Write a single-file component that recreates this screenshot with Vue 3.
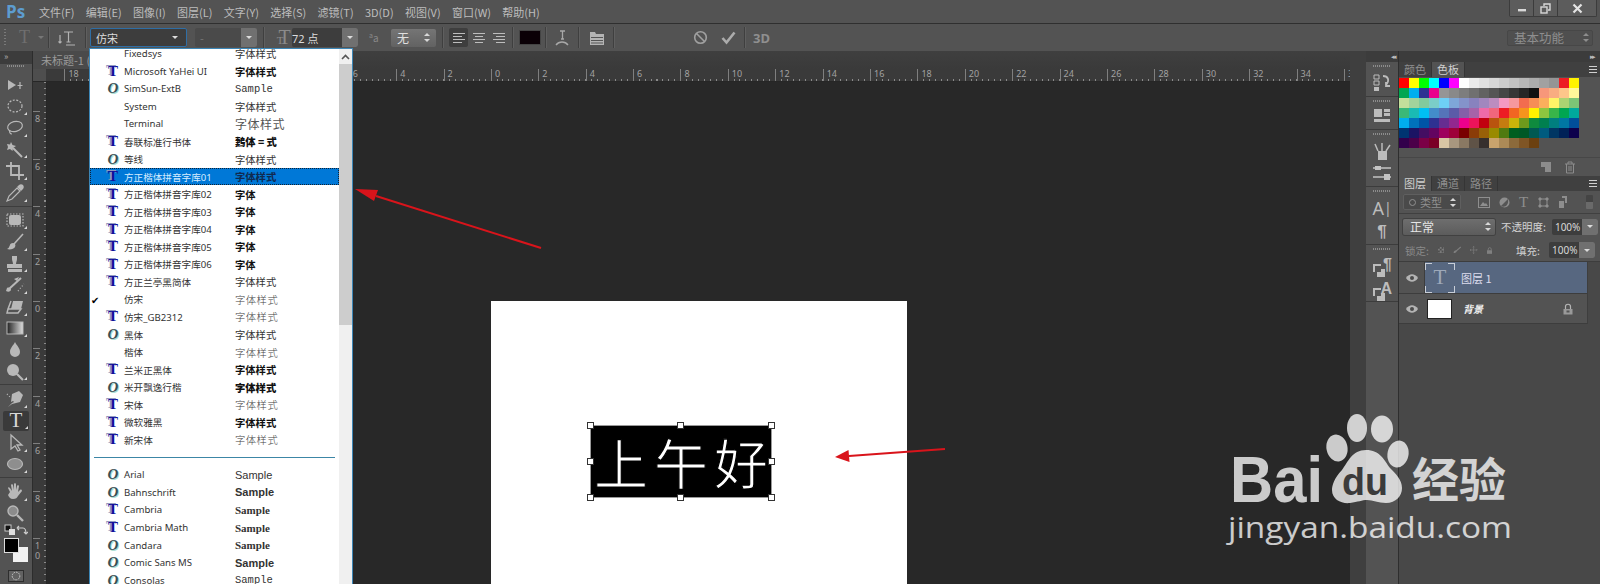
<template>
  <div class="ps">
    <!-- Menu bar -->
    <header class="menubar">
      <span class="logo">Ps</span>
      <nav class="menus">
        <span v-for="m in menus" :key="m">{{ m }}</span>
      </nav>
      <div class="winbtns">
        <span class="winbtn"><svg width="10" height="10" viewBox="0 0 10 10"><rect x="1" y="6" width="8" height="2.4" fill="#d8d8d8" /></svg></span>
        <span class="winbtn"><svg width="11" height="11" viewBox="0 0 11 11" fill="none" stroke="#d8d8d8" stroke-width="1.4"><rect x="1" y="4" width="6" height="6" /><path d="M4 3V1h6v6H8" /></svg></span>
        <span class="winbtn wide"><svg width="11" height="11" viewBox="0 0 11 11" stroke="#e4e4e4" stroke-width="2.2"><path d="M1.5 1.5l8 8M9.5 1.5l-8 8" /></svg></span>
      </div>
    </header>

    <!-- Options bar -->
    <div class="optbar">
      <span class="vgrip"></span>
      <span class="opt-t dim">T</span>
      <span class="caret small dimc"></span>
      <span class="vsep a"></span>
      <svg class="opt-ico b" width="20" height="20" viewBox="0 0 20 20" fill="none" stroke="#b4b4b4" stroke-width="1.2"><path d="M6 4h9M10.500 4v10M8.500 14h4M2 7v8M.5 13.500L2 15l1.500-1.500M8 17h9" /></svg>
      <span class="vsep c"></span>
      <div class="combo font"><span class="combo-val">仿宋</span><span class="caret"></span></div>
      <div class="combo style"><span class="combo-val">-</span><span class="combo-arrow"><span class="caret"></span></span></div>
      <span class="vsep d"></span>
      <span class="opt-tt">T<small>T</small></span>
      <div class="combo size"><span class="combo-val">72 点</span><span class="combo-arrow"><span class="caret"></span></span></div>
      <span class="aa"><sup>a</sup>a</span>
      <div class="spin"><span>无</span><span class="updown"></span></div>
      <span class="vsep e"></span>
      <span class="align on"><svg width="14" height="12" viewBox="0 0 14 12" stroke="#bdbdbd"><path d="M1 1.500h12M1 4.500h9M1 7.500h12M1 10.500h9" /></svg></span>
      <span class="align"><svg width="14" height="12" viewBox="0 0 14 12" stroke="#bdbdbd"><path d="M1 1.500h12M3 4.500h8M1 7.500h12M3 10.500h8" /></svg></span>
      <span class="align"><svg width="14" height="12" viewBox="0 0 14 12" stroke="#bdbdbd"><path d="M1 1.500h12M4 4.500h9M1 7.500h12M4 10.500h9" /></svg></span>
      <span class="vsep f"></span>
      <span class="swatch-black"></span>
      <span class="vsep g"></span>
      <svg class="opt-ico h" width="16" height="20" viewBox="0 0 16 20" fill="none" stroke="#a8a8a8" stroke-width="1.300"><path d="M6 3h5M8.500 3v8M7 11h3M2 17c3-4 9-4 12 0" /></svg>
      <span class="vsep g2"></span>
      <svg class="opt-ico i" width="16" height="16" viewBox="0 0 16 16"><path fill="#b4b4b4" d="M1 2h5l1 2h8v11H1z" /><path stroke="#555" d="M2 7.500h12M2 10.500h12M2 13h12" /></svg>
      <span class="vsep j"></span>
      <svg class="opt-ico k" width="15" height="15" viewBox="0 0 15 15" fill="none" stroke="#a0a0a0" stroke-width="1.600"><circle cx="7.500" cy="7.500" r="5.800" /><path d="M3.500 3.500l8 8" /></svg>
      <svg class="opt-ico l" width="15" height="15" viewBox="0 0 15 15" fill="none" stroke="#acacac" stroke-width="2.600"><path d="M1.500 8l4 4.500 8-10" /></svg>
      <span class="vsep m"></span>
      <span class="threed">3D</span>
      <div class="workspace-select"><span>基本功能</span><span class="updown"></span></div>
    </div>

    <div class="workspace">
      <!-- Tools -->
      <aside class="toolbar">
        <div class="toolbar-head">»</div>
        <div class="grip"></div>
        <div class="tool"><svg viewBox="0 0 22 22"><path class="fl" d="M4 6l8 5-8 5z" /><path d="M16 8v7M13.500 11.500h5" /></svg></div>
        <div class="tool corner"><svg viewBox="0 0 22 22"><ellipse cx="11" cy="11" rx="7" ry="6" stroke-dasharray="2 1.500" /></svg></div>
        <div class="tool corner"><svg viewBox="0 0 22 22"><ellipse cx="11" cy="9.500" rx="7.500" ry="5" transform="rotate(-15 11 9.500)" /><path d="M6 13c-1 2 0 4 2 4" /></svg></div>
        <div class="tool corner"><svg viewBox="0 0 22 22"><path class="fl" d="M7 3l1.500 3L12 7 9 9l-.5 3L6 10 3 11l1-3-1-3 3 .5z" /><path stroke-width="2" d="M9 9l9 9" /></svg></div>
        <div class="tool corner"><svg viewBox="0 0 22 22"><path stroke-width="1.800" d="M7 2v13h13M2 6h13v14" /></svg></div>
        <div class="tool corner"><svg viewBox="0 0 22 22"><path d="M3 19l2-5 8-8 3 3-8 8z" /><path class="fl" d="M13 5l2-2c1-1 3-1 4 0s1 3 0 4l-2 2z" /></svg></div>
        <div class="tooldiv"></div>
        <div class="tool corner"><svg viewBox="0 0 22 22"><rect class="fl" x="5" y="6" width="12" height="10" rx="2" /><path stroke-dasharray="1.500 1.500" d="M3 5h16v12H3z" /></svg></div>
        <div class="tool corner"><svg viewBox="0 0 22 22"><path stroke-width="1.600" d="M19 3L10 13" /><path class="fl" d="M9 12c2 0 3 2 2 4-1 2-5 3-8 2 2-1 2-2 3-4 0-1 1-2 3-2z" /></svg></div>
        <div class="tool corner"><svg viewBox="0 0 22 22"><path class="fl" d="M8 3h5v3c0 2-1 3-1 5h6v4H3v-4h6c0-2-1-3-1-5zM4 16h14v3H4z" /></svg></div>
        <div class="tool corner"><svg viewBox="0 0 22 22"><path stroke-width="2" d="M17 4L5 15" /><path class="fl" d="M3 14c2-1 4 0 4 2-1 2-3 2-5 1zM10 5l5-2-2 4z" /><path stroke-dasharray="1 2" d="M14 17l6-7" /></svg></div>
        <div class="tool corner"><svg viewBox="0 0 22 22"><path class="fl" d="M9 5h10l-2 8H7z" /><path stroke-width="1.500" d="M4 13l3-8M7 13H4l-1 4h11l3-4z" /></svg></div>
        <div class="tool corner"><svg viewBox="0 0 22 22"><rect x="3" y="5" width="16" height="12" fill="url(#grad)" stroke-width="1" /></svg></div>
        <div class="tool"><svg viewBox="0 0 22 22"><path class="fl" d="M11 3c2 4 5 6 5 10a5 5 0 0 1-10 0c0-4 3-6 5-10z" /></svg></div>
        <div class="tool corner"><svg viewBox="0 0 22 22"><circle class="fl" cx="9" cy="9" r="6" /><path stroke-width="2.200" d="M13 13l6 6" /></svg></div>
        <div class="tooldiv"></div>
        <div class="tool corner"><svg viewBox="0 0 22 22"><path class="fl" d="M15 3l4 4-3 7-8 2-4 3 4-4 2-1-1-1-2 1 1-8z" /><path stroke-dasharray="1 2" d="M3 6l3 3" /></svg></div>
        <div class="tool corner active"><span class="tool-t">T</span></div>
        <div class="tool corner"><svg viewBox="0 0 22 22"><path stroke-width="1.300" d="M7 3v14l4-3 3 5 2-1-3-5h5z" /></svg></div>
        <div class="tool corner"><svg viewBox="0 0 22 22"><ellipse class="fl2" cx="11" cy="11" rx="7.500" ry="5.500" /></svg></div>
        <div class="tooldiv"></div>
        <div class="tool corner"><svg viewBox="0 0 22 22"><path class="fl" d="M6 11L4 7c0-1 1-1 2 0l2 3-1-6c0-1 2-1 2 0l1 5V3c0-1 2-1 2 0v6l1-4c0-1 2-1 2 0l-1 6 2-2c1-1 2 0 2 1l-4 5c-1 2-2 3-5 3s-4-2-5-4z" /></svg></div>
        <div class="tool"><svg viewBox="0 0 22 22"><circle cx="9" cy="9" r="5" fill="#8c8c8c" stroke-width="1.400" /><path stroke-width="2.400" d="M13 13l6 6" /></svg></div>
        <div class="swap">
          <svg width="12" height="12" viewBox="0 0 12 12"><rect x="1" y="1" width="6" height="6" fill="#111" stroke="#ccc" /><rect x="5" y="5" width="6" height="6" fill="#ddd" /></svg>
          <svg width="12" height="12" viewBox="0 0 12 12" fill="none" stroke="#ccc" stroke-width="1.200"><path d="M2 4h5c2 0 3 1 3 6M1 4l2-2M1 4l2 2M8 8l2 2 2-2" /></svg>
        </div>
        <div class="colors">
          <span class="bg-color"></span>
          <span class="fg-color"></span>
        </div>
        <div class="quickmask"><svg width="16" height="12" viewBox="0 0 16 12"><rect x=".5" y=".5" width="15" height="11" fill="#626262" stroke="#2e2e2e" /><circle cx="8" cy="6" r="3.800" fill="none" stroke="#ccc" stroke-dasharray="1.500 1" /></svg></div>
      </aside>

      <!-- Document area -->
      <main class="docarea">
        <div class="tabstrip"><span class="doctab">未标题-1 (</span></div>
        <div class="hruler">
          <span class="ruler-corner"></span>
          <div class="hticks">
            <span v-for="(n, i) in hLabels" :key="i" class="hcell">{{ n }}</span>
          </div>
        </div>
        <div class="docrow">
          <div class="vruler">
            <span v-for="(n, i) in vLabels" :key="i" class="vcell">{{ n }}</span>
          </div>
          <div class="canvas">
            <div class="sheet">
              <div class="textbox">
                <span>上</span><span>午</span><span>好</span>
                <i v-for="h in handles" :key="h" class="handle" :class="h"></i>
              </div>
            </div>
          </div>
        </div>
      </main>
      <div class="gutter"></div>

      <!-- Icon strip -->
      <aside class="strip">
        <div class="strip-top"><span class="tiny">◂◂</span></div>
        <div class="strip-group">
          <div class="grip"></div>
          <svg width="22" height="20" viewBox="0 0 22 20"><path fill="none" stroke="#bcbcbc" d="M3 2h5v4H3zM3 8h5v4H3z" /><rect x="3" y="14" width="5" height="4" fill="#bcbcbc" /><path fill="none" stroke="#bcbcbc" stroke-width="1.800" d="M12 3c5 0 7 4 3 9M15 9v4h4" /></svg>
        </div>
        <div class="strip-group g2">
          <div class="grip"></div>
          <svg width="22" height="16" viewBox="0 0 22 16"><path fill="#bcbcbc" d="M3 1h8v8H3zM13 1h6v3h-6zM13 5h6v3h-6zM3 11h16v3H3z" /></svg>
        </div>
        <div class="strip-group g3">
          <div class="grip"></div>
          <svg width="22" height="20" viewBox="0 0 22 20"><path fill="#bcbcbc" d="M7 10h9v9H7z" /><path fill="none" stroke="#bcbcbc" stroke-width="1.500" d="M7 10L4 3M11 10V2M15 10l4-6" /></svg>
          <svg width="22" height="18" viewBox="0 0 22 18"><path fill="none" stroke="#c4c4c4" stroke-width="1.600" d="M2 4h18M2 13h18" /><path fill="#c4c4c4" d="M4 2h6v4H4zM13 10h6v6h-6z" /></svg>
        </div>
        <div class="strip-group g4">
          <div class="grip"></div>
          <span class="strip-a">A<b>|</b></span>
          <span class="strip-pil">¶</span>
        </div>
        <div class="strip-group g5">
          <div class="grip"></div>
          <span class="strip-style"><em>¶</em></span>
          <span class="strip-style"><em>A</em></span>
        </div>
      </aside>

      <!-- Panels -->
      <aside class="panels">
        <div class="panels-top"><span class="tiny">▸▸</span></div>
        <div class="ptabs">
          <span class="ptab">颜色</span>
          <span class="ptab on">色板</span>
          <span class="pmenu"></span>
        </div>
        <div class="swatch-body">
          <div class="swatches">
            <span v-for="(c, i) in swatches" :key="i" :style="{ background: c }"></span>
          </div>
        </div>
        <div class="swatch-foot">
          <svg width="12" height="12" viewBox="0 0 12 12"><path fill="#8c8c8c" d="M1 1h10v10H5V6H1z" /></svg>
          <svg width="12" height="13" viewBox="0 0 12 13" fill="none" stroke="#8c8c8c"><path d="M1 3h10M4 3V1h4v2M2.500 3v9h7V3M5 5v5M7 5v5" /></svg>
        </div>

        <div class="ptabs">
          <span class="ptab on">图层</span>
          <span class="ptab">通道</span>
          <span class="ptab">路径</span>
          <span class="pmenu"></span>
        </div>
        <div class="filter-row">
          <div class="select filter"><span class="lens"></span><span>类型</span><span class="updown"></span></div>
          <div class="filter-icons">
            <svg width="12" height="11" viewBox="0 0 12 11"><rect x=".5" y=".5" width="11" height="10" fill="none" stroke="#8e8e8e" /><path fill="#8e8e8e" d="M2 9l3-4 2 2 1-1 2 3z" /></svg>
            <svg width="11" height="11" viewBox="0 0 11 11"><circle cx="5.500" cy="5.500" r="5" fill="#8e8e8e" /><path fill="#555" d="M9 2L2 9c3 2 8 0 7-7z" /></svg>
            <span class="filter-t">T</span>
            <svg width="11" height="11" viewBox="0 0 11 11" fill="none" stroke="#8e8e8e"><path d="M2 2h7v7H2z" /><path fill="#8e8e8e" d="M1 1h2v2H1zM8 1h2v2H8zM1 8h2v2H1zM8 8h2v2H8z" /></svg>
            <svg width="11" height="12" viewBox="0 0 11 12"><path fill="#8e8e8e" d="M4 0h5v7H7V2H4zM1 5h5v7H1z" /></svg>
          </div>
          <span class="filter-toggle"></span>
        </div>
        <div class="blend-row">
          <div class="select blend"><span>正常</span><span class="updown"></span></div>
          <span class="plabel">不透明度:</span>
          <div class="pct"><span>100%</span><em><span class="caret"></span></em></div>
        </div>
        <div class="lock-row">
          <span class="plabel dim">锁定:</span>
          <svg width="10" height="10" viewBox="0 0 10 10"><rect width="10" height="10" fill="#7a7a7a" /><path fill="#4e4e4e" d="M0 0h3v3H0zM6 0h3v3H6zM3 3h3v3H3zM0 6h3v3H0zM6 6h3v3H6z" /></svg>
          <svg width="14" height="12" viewBox="0 0 14 12"><path stroke="#808080" stroke-width="1.800" d="M13 1L5 8" /><path fill="#808080" d="M1 11c0-3 2-4 4-4l1 1c0 2-2 3-5 3z" /></svg>
          <svg width="12" height="12" viewBox="0 0 12 12" fill="none" stroke="#808080"><path d="M6 0v12M0 6h12M4.500 1.500L6 0l1.500 1.500M4.500 10.500L6 12l1.500-1.500M1.500 4.500L0 6l1.500 1.500M10.500 4.500L12 6l-1.500 1.500" /></svg>
          <svg width="9" height="11" viewBox="0 0 9 11"><path fill="#808080" d="M0 5h9v6H0z" /><path fill="none" stroke="#808080" stroke-width="1.300" d="M2 5V3c0-3 5-3 5 0v2" /></svg>
          <span class="plabel fill">填充:</span>
          <div class="pct"><span>100%</span><em><span class="caret"></span></em></div>
        </div>
        <div class="layers">
          <div class="layer selected">
            <span class="eye"><svg width="12" height="8" viewBox="0 0 12 8"><path fill="#b4b4b4" d="M0 4c3-5 9-5 12 0-3 5-9 5-12 0z" /><circle cx="6" cy="4" r="2" fill="#4a4a4a" /></svg></span>
            <span class="tthumb">T</span>
            <span class="lname">图层 1</span>
          </div>
          <div class="layer">
            <span class="eye"><svg width="12" height="8" viewBox="0 0 12 8"><path fill="#b4b4b4" d="M0 4c3-5 9-5 12 0-3 5-9 5-12 0z" /><circle cx="6" cy="4" r="2" fill="#4a4a4a" /></svg></span>
            <span class="wthumb"></span>
            <span class="lname bgname">背景</span>
            <svg class="llock" width="10" height="12" viewBox="0 0 10 12"><path fill="none" stroke="#b4b4b4" stroke-width="1.200" d="M2.500 6V3.500c0-3 5-3 5 0V6" /><rect x=".5" y="6" width="9" height="5.500" fill="#999" /><rect x="3.500" y="7.500" width="3" height="2" fill="#555" /></svg>
          </div>
        </div>
      </aside>
    </div>

    <!-- Font dropdown, open over the document -->
    <div class="fontlist">
      <div class="rows">
        <template v-for="(f, i) in fonts" :key="i">
          <div v-if="f.sep" class="rowsep"><span></span></div>
          <div v-else class="row" :class="{ sel: f.sel }">
            <span class="check">{{ f.checked ? '✔' : '' }}</span>
            <span class="ficon" :class="f.icon">{{ f.icon === 'tt' ? 'T' : f.icon === 'oo' ? 'O' : '' }}</span>
            <span class="fname">{{ f.name }}</span>
            <span class="fsample" :class="f.cls">{{ f.sample }}</span>
          </div>
        </template>
      </div>
      <div class="scrollbar">
        <span class="scroll-up"><svg width="9" height="6" viewBox="0 0 9 6" fill="none" stroke="#555" stroke-width="1.600"><path d="M1 5l3.500-3.500L8 5" /></svg></span>
        <span class="scroll-thumb"></span>
      </div>
    </div>

    <!-- Annotation arrows -->
    <svg class="arrows" width="1600" height="584" viewBox="0 0 1600 584">
      <defs>
        <linearGradient id="grad"><stop offset="0" stop-color="#222" /><stop offset="1" stop-color="#ddd" /></linearGradient>
      </defs>
      <path d="M541 248L376 196" stroke="#d9141b" stroke-width="2" />
      <path d="M355 189l23 1-4 11z" fill="#d9141b" />
      <path d="M945 449L849 456" stroke="#d9141b" stroke-width="2.200" />
      <path d="M835 457l14.500 5-1-12z" fill="#d9141b" />
    </svg>

    <!-- Watermark -->
    <svg class="mark" width="300" height="160" viewBox="0 0 300 160">
      <g fill="#fff" opacity=".76">
        <ellipse cx="117" cy="48" rx="10.500" ry="13.500" transform="rotate(-12 117 48)" />
        <ellipse cx="137" cy="28" rx="10" ry="14" />
        <ellipse cx="162" cy="29" rx="11" ry="13.500" />
        <ellipse cx="178" cy="54" rx="10.500" ry="13.500" transform="rotate(12 178 54)" />
        <path d="M146 50c-14 0-18 12-24 20-8 8-10 16-10 20 0 10 10 14 18 13 8-1 12-3 17-3 6 0 11 3 19 3 10 0 16-7 16-15 0-8-6-14-12-20-6-8-10-18-24-18z" />
        <text x="10" y="102" class="mark-bai" textLength="93" lengthAdjust="spacingAndGlyphs">Bai</text>
        <text x="192" y="97" class="mark-cn">经验</text>
        <text x="8" y="138" class="mark-url" textLength="284" lengthAdjust="spacingAndGlyphs">jingyan.baidu.com</text>
      </g>
      <text x="122" y="95" class="mark-du" textLength="46" lengthAdjust="spacingAndGlyphs">du</text>
    </svg>
  </div>
</template>

<script setup>
const menus = ['文件(F)', '编辑(E)', '图像(I)', '图层(L)', '文字(Y)', '选择(S)', '滤镜(T)', '3D(D)', '视图(V)', '窗口(W)', '帮助(H)']

// 16 to 8 sit under the open dropdown, so those cells stay empty
const hLabels = [18, '', '', '', '', '', 6, 4, 2, 0]
for (let n = 2; n <= 36; n += 2) hLabels.push(n)
const vLabels = [8, 6, 4, 2, 0, 2, 4, 6, 8, 10]

const handles = ['tl', 'tm', 'tr', 'ml', 'mr', 'bl', 'bm', 'br']

const swatches = [
  '#ff0000', '#ffff00', '#00ff00', '#00ffff', '#0000ff', '#ff00ff', '#ffffff', '#ebebeb', '#e1e1e1', '#d7d7d7', '#cccccc', '#c2c2c2', '#b7b7b7', '#acacac', '#a1a1a1', '#959595', '#ed1c24', '#fff200',
  '#00a651', '#00aeef', '#2e3192', '#ec008c', '#959595', '#898989', '#7d7d7d', '#707070', '#626262', '#555555', '#464646', '#363636', '#262626', '#111111', '#f7977a', '#f9ad81', '#fdc68a', '#fff79a',
  '#c4df9b', '#a2d39c', '#82ca9d', '#7bcdc8', '#6ecff6', '#7ea7d8', '#8493ca', '#8882be', '#a187be', '#bc8dbf', '#f49ac2', '#f6989d', '#f26c4f', '#f68e55', '#fbaf5c', '#fff467', '#acd372', '#7cc576',
  '#3bb878', '#1abbb4', '#00bff3', '#438cca', '#5574b9', '#5c5ba8', '#855fa8', '#a763a8', '#ee6aa7', '#f1667c', '#ed1c24', '#f26522', '#f7941d', '#fff200', '#8dc63f', '#39b54a', '#00a651', '#00a99d',
  '#00aeef', '#0072bc', '#0054a6', '#2e3192', '#662d91', '#92278f', '#ec008c', '#ed145b', '#c1000f', '#b9540e', '#c47c10', '#c9b40a', '#6f9a1c', '#0f8a3e', '#007f4f', '#007f7f', '#0076a3', '#004f9a',
  '#003471', '#1b1464', '#440e62', '#630460', '#9e005d', '#9e0039', '#790000', '#8a3c08', '#996008', '#998a00', '#4f7a10', '#005e20', '#005826', '#005952', '#005b7f', '#003663', '#002157', '#0d004c',
  '#32004b', '#4b0049', '#7b0046', '#7a0026', '#d9c6a4', '#a8977f', '#8a7963', '#5f5347', '#362f2d', '#c9a36d', '#ac8a57', '#8c6a3b', '#7f5525', '#6b4010'
]

const fonts = [
  { name: 'Fixedsys', icon: '', sample: '字体样式', cls: 's-plain' },
  { name: 'Microsoft YaHei UI', icon: 'tt', sample: '字体样式', cls: 's-bold' },
  { name: 'SimSun-ExtB', icon: 'oo', sample: 'Sample', cls: 's-mono' },
  { name: 'System', icon: '', sample: '字体样式', cls: 's-plain' },
  { name: 'Terminal', icon: '', sample: '字体样式', cls: 's-wide' },
  { name: '春联标准行书体', icon: 'tt', sample: '鶈体 = 式', cls: 's-heavy' },
  { name: '等线', icon: 'oo', sample: '字体样式', cls: 's-plain' },
  { name: '方正楷体拼音字库01', icon: 'tt', sample: '字体样式', cls: 's-bold', sel: true },
  { name: '方正楷体拼音字库02', icon: 'tt', sample: '字体', cls: 's-bold' },
  { name: '方正楷体拼音字库03', icon: 'tt', sample: '字体', cls: 's-bold' },
  { name: '方正楷体拼音字库04', icon: 'tt', sample: '字体', cls: 's-bold' },
  { name: '方正楷体拼音字库05', icon: 'tt', sample: '字体', cls: 's-bold' },
  { name: '方正楷体拼音字库06', icon: 'tt', sample: '字体', cls: 's-bold' },
  { name: '方正兰亭黑简体', icon: 'tt', sample: '字体样式', cls: 's-plain' },
  { name: '仿宋', icon: '', checked: true, sample: '字体样式', cls: 's-light' },
  { name: '仿宋_GB2312', icon: 'tt', sample: '字体样式', cls: 's-light' },
  { name: '黑体', icon: 'oo', sample: '字体样式', cls: 's-plain' },
  { name: '楷体', icon: '', sample: '字体样式', cls: 's-light' },
  { name: '兰米正黑体', icon: 'tt', sample: '字体样式', cls: 's-bold' },
  { name: '米开飘逸行楷', icon: 'oo', sample: '字体样式', cls: 's-heavy' },
  { name: '宋体', icon: 'tt', sample: '字体样式', cls: 's-light' },
  { name: '微软雅黑', icon: 'tt', sample: '字体样式', cls: 's-bold' },
  { name: '新宋体', icon: 'tt', sample: '字体样式', cls: 's-light' },
  { sep: true },
  { name: 'Arial', icon: 'oo', sample: 'Sample', cls: 's-arial' },
  { name: 'Bahnschrift', icon: 'oo', sample: 'Sample', cls: 's-arial b' },
  { name: 'Cambria', icon: 'tt', sample: 'Sample', cls: 's-serif' },
  { name: 'Cambria Math', icon: 'tt', sample: 'Sample', cls: 's-serif' },
  { name: 'Candara', icon: 'oo', sample: 'Sample', cls: 's-serif' },
  { name: 'Comic Sans MS', icon: 'oo', sample: 'Sample', cls: 's-arial b' },
  { name: 'Consolas', icon: 'oo', sample: 'Sample', cls: 's-mono' }
]
</script>

<style>
html, body { margin: 0; background: #282828; }
</style>

<style scoped>
.ps {
  position: relative;
  width: 1600px;
  height: 584px;
  overflow: hidden;
  background: #535353;
  color: #c4c4c4;
  font-family: "Noto Sans CJK SC", "Noto Sans", sans-serif;
  font-size: 11px;
}

/* Menu bar */
.menubar {
  height: 23px;
  display: flex;
  align-items: center;
  background: #535353;
  border-bottom: 1px solid #2f2f2f;
}
.logo {
  width: 39px;
  padding-left: 6px;
  box-sizing: border-box;
  font: bold 17px "Open Sans", sans-serif;
  color: #5d9ccf;
}
.menus {
  display: flex;
  gap: 11.300px;
  color: #bdbdbd;
}
.winbtns {
  margin-left: auto;
  margin-right: 3px;
  align-self: flex-start;
  display: flex;
  height: 16px;
  border: 1px solid #3c3c3c;
  border-top: 0;
  border-radius: 0 0 2px 2px;
}
.winbtn {
  width: 23px;
  display: flex;
  align-items: center;
  justify-content: center;
  background: #5c5c5c;
  border-right: 1px solid #3c3c3c;
}
.winbtn.wide { width: 38px; border-right: 0; }

/* Options bar */
.optbar {
  height: 27px;
  display: flex;
  align-items: center;
  background: #535353;
  position: relative;
}
.vgrip {
  width: 2px;
  height: 18px;
  margin-left: 4px;
  background: repeating-linear-gradient(#7a7a7a 0 1px, transparent 1px 3px);
}
.opt-t {
  margin-left: 13px;
  width: 12px;
  font: 18px "Liberation Serif", serif;
  color: #6f6f6f;
}
.caret {
  display: inline-block;
  width: 0;
  height: 0;
  border-left: 3px solid transparent;
  border-right: 3px solid transparent;
  border-top: 3px solid #dcdcdc;
}
.caret.small { margin-left: 7px; }
.caret.dimc { border-top-color: #777; }
.vsep {
  width: 1px;
  height: 21px;
  background: #3f3f3f;
  box-shadow: 1px 0 0 #5f5f5f;
  flex: none;
}
.vsep.a { margin-left: 4px; }
.opt-ico.b { margin-left: 9px; }
.vsep.c { margin-left: 7px; }
.combo {
  height: 19px;
  display: flex;
  align-items: center;
  box-sizing: border-box;
  flex: none;
}
.combo-val { flex: 1; padding-left: 5px; }
.combo.font {
  width: 97px;
  margin-left: 4px;
  background: #3d3d3d;
  border: 1px solid #2f6ea5;
  border-radius: 2px;
  color: #dcdcdc;
  padding-right: 8px;
}
.combo.style {
  width: 62px;
  margin-left: 8px;
  background: #4a4a4a;
  color: #777;
  border-radius: 2px;
}
.combo-arrow {
  width: 16px;
  height: 100%;
  display: flex;
  align-items: center;
  justify-content: center;
  background: #707070;
  border-radius: 0 2px 2px 0;
}
.vsep.d { margin-left: 6px; }
.opt-tt {
  margin-left: 6px;
  width: 22px;
  font: 20px "Liberation Serif", serif;
  color: #8a8a8a;
  text-align: center;
}
.opt-tt small { font-size: 11px; margin-left: -14px; }
.combo.size {
  width: 66px;
  background: #3d3d3d;
  border-radius: 2px;
  color: #dcdcdc;
  font-family: "Noto Sans", "Noto Sans CJK SC", sans-serif;
}
.combo.size .combo-val { padding-left: 0; }
.combo.size .combo-arrow { width: 16px; }
.aa {
  margin-left: 11px;
  width: 22px;
  color: #888;
  font-size: 10px;
}
.aa sup { font-size: 7px; vertical-align: 4px; line-height: 0; }
.spin {
  width: 45px;
  height: 18px;
  margin-left: 0;
  padding: 0 6px;
  box-sizing: border-box;
  display: flex;
  align-items: center;
  justify-content: space-between;
  background: linear-gradient(#757575, #626262);
  border-radius: 2px;
  color: #e0e0e0;
  font-size: 12px;
}
.updown {
  display: inline-block;
  width: 0;
  height: 9px;
  border-left: 3px solid transparent;
  border-right: 3px solid transparent;
  background: none;
  position: relative;
}
.updown::before, .updown::after {
  content: "";
  position: absolute;
  left: -3px;
  border-left: 3px solid transparent;
  border-right: 3px solid transparent;
}
.updown::before { top: 0; border-bottom: 3px solid #d8d8d8; }
.updown::after { bottom: 0; border-top: 3px solid #d8d8d8; }
.vsep.e { margin-left: 6px; }
.align {
  width: 19px;
  height: 19px;
  margin-right: 1px;
  display: flex;
  align-items: center;
  justify-content: center;
  border-radius: 2px;
  flex: none;
}
.align.on { background: #3e3e3e; margin-left: 6px; }
.vsep.f { margin-left: 3px; }
.swatch-black {
  width: 22px;
  height: 15px;
  margin-left: 6px;
  background: #0a0006;
  border: 1px solid #444;
  box-sizing: border-box;
}
.vsep.g { margin-left: 4px; }
.opt-ico.h { margin-left: 8px; }
.vsep.g2 { margin-left: 8px; }
.opt-ico.i { margin-left: 10px; }
.vsep.j { margin-left: 8px; }
.opt-ico.k { margin-left: 79px; }
.opt-ico.l { margin-left: 13px; }
.vsep.m { margin-left: 8px; }
.threed {
  margin-left: 8px;
  font: bold 13px "Noto Sans", sans-serif;
  color: #8f8f8f;
}
.workspace-select {
  margin-left: auto;
  margin-right: 7px;
  width: 86px;
  height: 16px;
  padding: 0 3px 0 6px;
  box-sizing: border-box;
  display: flex;
  align-items: center;
  justify-content: space-between;
  background: #4f4f4f;
  border: 1px solid #474747;
  border-radius: 2px;
  color: #8e8e8e;
  font-size: 12.5px;
}
.workspace-select .updown::before { border-bottom-color: #8e8e8e; }
.workspace-select .updown::after { border-top-color: #8e8e8e; }

.workspace {
  height: 533px;
  display: flex;
  background: #3d3d3d;
  border-top: 0;
}

/* Tools */
.toolbar {
  width: 32px;
  flex: none;
  background: #535353;
  border-right: 1px solid #2c2c2c;
}
.toolbar-head {
  height: 13px;
  background: #3c3c3c;
  color: #aaa;
  font-size: 9px;
  line-height: 11px;
  padding-left: 4px;
}
.grip {
  height: 2px;
  margin: 0 auto;
  width: 18px;
  background: repeating-linear-gradient(90deg, #8c8c8c 0 1px, transparent 1px 2px);
}
.toolbar .grip { margin: 1px auto 7px; }
.tool {
  position: relative;
  width: 26px;
  height: 21.6px;
  margin-left: 2px;
  display: flex;
  align-items: center;
  justify-content: center;
  border-radius: 2px;
}
.tool svg {
  width: 22px;
  height: 22px;
  fill: none;
  stroke: #b8b8b8;
  stroke-width: 1.200;
}
.tool svg .fl { fill: #b8b8b8; stroke: none; }
.tool svg .fl2 { fill: #8e8e8e; stroke: #b8b8b8; }
.tool.corner::after {
  content: "";
  position: absolute;
  right: 1px;
  bottom: 2px;
  border-left: 3px solid transparent;
  border-bottom: 3px solid #d8d8d8;
}
.tool.active { background: #3a3a3a; height: 20px; margin: 1px 0 1px 3px; }
.tool-t {
  font: 21px "Liberation Serif", serif;
  color: #d8d8d8;
}
.tooldiv {
  height: 1px;
  margin: 2px 0 3px;
  background: #3d3d3d;
}
.swap {
  height: 12px;
  padding: 0 4px;
  display: flex;
  justify-content: space-between;
}
.colors {
  position: relative;
  height: 29px;
}
.fg-color, .bg-color {
  position: absolute;
  width: 15px;
  height: 15px;
  box-sizing: border-box;
}
.fg-color { left: 4px; top: 2px; background: #000; border: 1px solid #ddd; }
.bg-color { left: 13px; top: 11px; background: #f2f2f2; }
.quickmask {
  height: 21px;
  display: flex;
  align-items: center;
  justify-content: center;
}

/* Document area */
.docarea {
  width: 1317px;
  flex: none;
  display: flex;
  flex-direction: column;
  background: #282828;
}
.tabstrip {
  height: 18px;
  background: linear-gradient(#3f3f3f, #3a3a3a);
  flex: none;
}
.doctab {
  display: inline-block;
  width: 120px;
  height: 18px;
  padding-left: 8px;
  box-sizing: border-box;
  background: #4a4a4a;
  color: #9a9a9a;
  font-size: 11px;
  line-height: 19px;
}
.hruler {
  height: 12px;
  display: flex;
  flex: none;
  background: #3a3a3a;
  border-bottom: 1px solid #262626;
  overflow: hidden;
}
.ruler-corner {
  width: 13px;
  flex: none;
  background: #4e4e4e;
}
.hticks {
  display: flex;
  padding-left: 18.400px;
  flex: 1;
  background-image: repeating-linear-gradient(90deg, #8a8a8a 0 1px, transparent 1px 5.925px);
  background-size: 100% 2px;
  background-position: 18.400px bottom;
  background-repeat: no-repeat;
}
.hcell {
  flex: none;
  width: 47.400px;
  box-sizing: border-box;
  border-left: 1px solid #7f7f7f;
  padding-left: 3px;
  font: 9px/10px "Noto Sans", sans-serif;
  color: #a2a2a2;
}
.docrow {
  flex: 1;
  display: flex;
  min-height: 0;
}
.vruler {
  width: 14px;
  flex: none;
  padding-top: 29.400px;
  box-sizing: border-box;
  background-color: #3a3a3a;
  background-image: repeating-linear-gradient(#8a8a8a 0 1px, transparent 1px 5.925px);
  background-size: 2px 100%;
  background-position: right 0;
  background-repeat: no-repeat;
  border-right: 1px solid #262626;
  overflow: hidden;
}
.vcell {
  display: block;
  height: 47.400px;
  box-sizing: border-box;
  border-top: 1px solid #7f7f7f;
  padding: 2px 0 0 2px;
  width: 7px;
  word-break: break-all;
  font: 9px/10px "Noto Sans", sans-serif;
  color: #a2a2a2;
}
.canvas {
  flex: 1;
  position: relative;
  background: #282828;
}
.sheet {
  position: absolute;
  left: 444px;
  top: 219px;
  width: 416px;
  height: 300px;
  background: #fff;
}
.textbox {
  position: absolute;
  left: 100px;
  top: 125px;
  width: 180px;
  height: 71px;
  box-sizing: border-box;
  display: grid;
  grid-template-columns: repeat(3, 60px);
  align-items: center;
  justify-items: center;
  background: #000;
  outline: 1px solid #999;
  color: #fff;
  font-size: 54px;
  line-height: 71px;
  -webkit-text-stroke: 1.200px #000;
}
.handle {
  position: absolute;
  width: 5px;
  height: 5px;
  background: #fff;
  border: 1px solid #333;
}
.tl { left: -4px; top: -4px; }
.tm { left: 86px; top: -4px; }
.tr { right: -4px; top: -4px; }
.ml { left: -4px; top: 32px; }
.mr { right: -4px; top: 32px; }
.bl { left: -4px; bottom: -4px; }
.bm { left: 86px; bottom: -4px; }
.br { right: -4px; bottom: -4px; }
.gutter {
  width: 16px;
  flex: none;
  background: #3f3f3f;
}

/* Icon strip */
.strip {
  width: 32px;
  flex: none;
  background: #535353;
  border-right: 1px solid #2e2e2e;
  display: flex;
  flex-direction: column;
}
.strip-top {
  height: 11px;
  background: #3c3c3c;
  text-align: right;
  padding-right: 3px;
}
.tiny { font-size: 7px; line-height: 11px; color: #bbb; display: block; letter-spacing: -2px; }
.strip-group {
  display: flex;
  flex-direction: column;
  align-items: center;
  gap: 3px;
  padding-top: 3px;
  height: 35px;
  box-sizing: border-box;
  border-bottom: 1px solid #3c3c3c;
}
.strip-group .grip { margin-bottom: 3px; }
.strip-group.g2 { height: 33px; }
.strip-group.g3 { height: 57px; }
.strip-group.g4 { height: 58px; }
.strip-group.g5 { height: 57px; }
.strip-a { font: 18px/20px "Noto Sans", sans-serif; color: #bcbcbc; }
.strip-a b { font-weight: 400; font-size: 14px; vertical-align: 2px; }
.strip-pil { font: bold 17px/22px "Liberation Sans", sans-serif; color: #bcbcbc; }
.strip-style {
  height: 22px;
  width: 20px;
  display: flex;
  justify-content: flex-end;
  background:
    linear-gradient(#535353, #535353) 3px 10px / 6px 6px no-repeat,
    linear-gradient(#bcbcbc, #bcbcbc) 1px 8px / 8px 8px no-repeat,
    linear-gradient(#bcbcbc, #bcbcbc) 5px 13px / 8px 8px no-repeat;
}
.strip-style em { font: bold 16px/18px "Liberation Sans", sans-serif; color: #bcbcbc; }

/* Panels */
.panels {
  width: 201px;
  flex: none;
  background: #484848;
  display: flex;
  flex-direction: column;
}
.panels-top {
  height: 11px;
  background: #3c3c3c;
  text-align: right;
  padding-right: 6px;
}
.ptabs {
  height: 15px;
  display: flex;
  align-items: stretch;
  background: #404040;
  flex: none;
  position: relative;
}
.ptab {
  width: 32px;
  text-align: center;
  color: #8f8f8f;
  font-size: 11px;
  line-height: 14px;
  border-right: 1px solid #353535;
}
.ptab.on { background: #535353; color: #d0d0d0; }
.pmenu {
  margin: 4px 3px 0 auto;
  width: 8px;
  height: 7px;
  background: repeating-linear-gradient(#d0d0d0 0 1px, transparent 1px 3px);
}
.swatch-body {
  height: 80px;
  background: #535353;
  padding-right: 13px;
  flex: none;
}
.swatches {
  display: grid;
  grid-template-columns: repeat(18, 10px);
  grid-auto-rows: 10px;
  padding-top: 1px;
}
.swatch-foot {
  height: 19px;
  flex: none;
  background: #535353;
  border-top: 1px solid #474747;
  box-sizing: border-box;
  display: flex;
  align-items: center;
  justify-content: flex-end;
  gap: 12px;
  padding-right: 24px;
}
.filter-row, .blend-row, .lock-row {
  display: flex;
  align-items: center;
  background: #535353;
  flex: none;
  box-sizing: border-box;
}
.filter-row {
  height: 23px;
  padding-left: 4px;
  border-bottom: 1px solid #404040;
}
.select {
  display: flex;
  align-items: center;
  box-sizing: border-box;
  border-radius: 2px;
  flex: none;
}
.select.filter {
  width: 58px;
  height: 16px;
  padding: 0 4px 0 5px;
  gap: 4px;
  background: #4a4a4a;
  color: #8f8f8f;
  border: 1px solid #5f5f5f;
}
.select .updown { margin-left: auto; }
.lens {
  width: 5px;
  height: 5px;
  border: 1px solid #8f8f8f;
  border-radius: 50%;
}
.filter-icons {
  display: flex;
  align-items: center;
  gap: 9px;
  margin-left: 17px;
}
.filter-t {
  font: 15px/14px "Liberation Serif", serif;
  color: #8e8e8e;
  width: 10px;
}
.filter-toggle {
  width: 7px;
  height: 14px;
  margin-left: 17px;
  background: linear-gradient(#444 50%, #6a6a6a 50%);
  border-radius: 1px;
}
.blend-row {
  height: 25px;
  padding-left: 4px;
  gap: 6px;
}
.select.blend {
  width: 92px;
  height: 16px;
  padding: 0 4px 0 7px;
  background: linear-gradient(#6e6e6e, #5c5c5c);
  color: #e6e6e6;
  font-size: 12px;
  box-shadow: 0 0 0 1px #414141;
}
.plabel { color: #d4d4d4; font-size: 10.500px; white-space: nowrap; flex: none; }
.plabel.dim { color: #8a8a8a; }
.pct {
  margin-left: auto;
  margin-right: 5px;
  width: 46px;
  height: 16px;
  flex: none;
  display: flex;
  align-items: center;
  background: #3d3d3d;
  border-radius: 2px;
  color: #d8d8d8;
  font-family: "Noto Sans", sans-serif;
  font-size: 10px;
}
.pct > span { flex: 1; padding-left: 3px; }
.pct em {
  width: 16px;
  height: 100%;
  display: flex;
  align-items: center;
  justify-content: center;
  background: #707070;
  border-radius: 0 2px 2px 0;
}
.lock-row {
  height: 23px;
  padding-left: 6px;
  gap: 9px;
  border-bottom: 1px solid #3d3d3d;
}
.lock-row .plabel.fill { margin-left: 15px; color: #d4d4d4; }
.layers {
  width: 188px;
  flex: none;
  background: #4e4e4e;
  border-right: 1px solid #3e3e3e;
}
.layer {
  position: relative;
  display: flex;
  align-items: center;
  height: 29px;
  background: #535353;
  border-bottom: 1px solid #3d3d3d;
}
.layer.selected { height: 31px; background: linear-gradient(90deg, #535353 25px, #3d3d3d 25px, #3d3d3d 26px, #576780 26px); }
.eye {
  width: 26px;
  flex: none;
  text-align: center;
  line-height: 0;
}
.tthumb {
  width: 30px;
  height: 30px;
  display: flex;
  align-items: center;
  justify-content: center;
  font: 21px "Liberation Serif", serif;
  color: #9ea9ba;
  background:
    linear-gradient(#c8ced8, #c8ced8) 0 0 / 7px 1px no-repeat,
    linear-gradient(#c8ced8, #c8ced8) 0 0 / 1px 7px no-repeat,
    linear-gradient(#c8ced8, #c8ced8) 100% 0 / 7px 1px no-repeat,
    linear-gradient(#c8ced8, #c8ced8) 100% 0 / 1px 7px no-repeat,
    linear-gradient(#c8ced8, #c8ced8) 0 100% / 7px 1px no-repeat,
    linear-gradient(#c8ced8, #c8ced8) 0 100% / 1px 7px no-repeat,
    linear-gradient(#c8ced8, #c8ced8) 100% 100% / 7px 1px no-repeat,
    linear-gradient(#c8ced8, #c8ced8) 100% 100% / 1px 7px no-repeat;
}
.lname { margin-left: 6px; color: #dde; }
.wthumb {
  width: 25px;
  height: 20px;
  margin-left: 2px;
  background: #fff;
  border: 1px solid #222;
  box-sizing: border-box;
}
.bgname {
  margin-left: 11px;
  font-weight: 700;
  font-style: italic;
  font-size: 10px;
  color: #eee;
}
.llock { margin-left: auto; margin-right: 14px; }

/* Font dropdown */
.fontlist {
  position: absolute;
  left: 89px;
  top: 48px;
  width: 264px;
  height: 540px;
  box-sizing: border-box;
  display: flex;
  overflow: hidden;
  background: #fff;
  border: 1px solid #3c86b6;
  color: #333;
  font-size: 10px;
}
.rows {
  width: 249px;
  flex: none;
  margin-top: -4px;
}
.row {
  height: 17.550px;
  display: flex;
  align-items: center;
}
.row.sel {
  background: #0078d7;
  outline: 1px dotted #123;
  outline-offset: -1px;
}
.row.sel .fname { color: #d6ecff; }
.row.sel .fsample { color: #102a50; }
.check { width: 10px; margin-left: 0; font-size: 10px; color: #000; flex: none; text-align: center; }
.ficon {
  width: 16px;
  margin-left: 5px;
  flex: none;
  text-align: center;
  font-family: "Liberation Serif", serif;
  font-size: 15px;
  line-height: 15px;
}
.ficon.tt {
  font-weight: 700;
  color: #10109a;
  text-shadow: -2px -1px 0 #9096bd;
}
.ficon.oo {
  font-style: italic;
  font-weight: 700;
  color: #3a4f55;
  text-shadow: 1px 1px 0 #a4dcd0;
}
.fname {
  width: 111px;
  margin-left: 3px;
  flex: none;
  font-family: "Noto Sans", "Noto Sans CJK SC", sans-serif;
  font-size: 9.600px;
  white-space: nowrap;
}
.fsample { white-space: nowrap; font-size: 10.300px; color: #333; }
.s-bold { font-weight: 700; color: #111; }
.s-heavy { font-weight: 900; color: #111; }
.s-light { letter-spacing: .500px; color: #444; font-weight: 300; }
.s-wide { font-size: 12px; color: #555; letter-spacing: .500px; }
.s-mono { font: 10.500px "Liberation Mono", monospace; }
.s-arial { font: 11px "Liberation Sans", sans-serif; }
.s-arial.b { font-weight: 700; }
.s-serif { font: 11px "Liberation Serif", serif; font-weight: 700; }
.rowsep {
  height: 17.550px;
  display: flex;
  align-items: center;
  padding: 0 4px;
}
.rowsep span {
  width: 100%;
  height: 1px;
  background: #3c86a6;
}
.scrollbar {
  flex: 1;
  background: #f0f0f0;
  display: flex;
  flex-direction: column;
}
.scroll-up {
  height: 15px;
  display: flex;
  align-items: center;
  justify-content: center;
}
.scroll-thumb {
  height: 261px;
  background: #cdcdcd;
}

/* Overlays */
.arrows, .mark {
  position: absolute;
  pointer-events: none;
}
.arrows { left: 0; top: 0; }
.mark { left: 1220px; top: 400px; }
.mark-bai { font: bold 65px "Liberation Sans", sans-serif; }
.mark-cn { font: bold 47px "Noto Sans CJK SC", sans-serif; }
.mark-url { font: 30px "Open Sans", sans-serif; }
.mark-du { font: bold 38px "Liberation Sans", sans-serif; fill: #3b3b3b; }
</style>
